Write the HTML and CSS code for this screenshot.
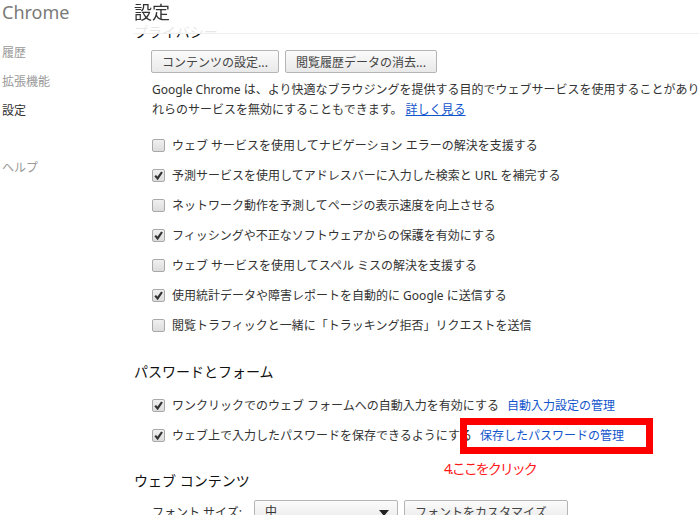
FILE: index.html
```html
<!DOCTYPE html>
<html lang="ja">
<head>
  <meta charset="UTF-8">
  <title>設定</title>
  <link rel="stylesheet" href="styles.css">
</head>
<body>

  <!-- left navigation -->
  <div class="nav">
    <div class="nav-title">Chrome</div>
    <ul class="nav-list">
      <li>履歴</li>
      <li>拡張機能</li>
      <li class="selected">設定</li>
      <li class="help">ヘルプ</li>
    </ul>
  </div>

  <div class="main">
    <div class="page-header">
      <h1>設定</h1>
      <input class="search" type="text" value="設定を検索">
    </div>

    <div class="section">
      <h3>プライバシー</h3>
      <div class="section-body">
        <div class="button-row">
          <button class="btn">コンテンツの設定...</button>
          <button class="btn">閲覧履歴データの消去...</button>
        </div>
        <p class="desc">Google Chrome は、より快適なブラウジングを提供する目的でウェブサービスを使用することがあります。必要に応じて、こ<br>れらのサービスを無効にすることもできます。 <a href="#">詳しく見る</a></p>

        <div class="check-row"><span class="cb"></span>ウェブ サービスを使用してナビゲーション エラーの解決を支援する</div>
        <div class="check-row"><span class="cb checked"></span>予測サービスを使用してアドレスバーに入力した検索と URL を補完する</div>
        <div class="check-row"><span class="cb"></span>ネットワーク動作を予測してページの表示速度を向上させる</div>
        <div class="check-row"><span class="cb checked"></span>フィッシングや不正なソフトウェアからの保護を有効にする</div>
        <div class="check-row"><span class="cb"></span>ウェブ サービスを使用してスペル ミスの解決を支援する</div>
        <div class="check-row"><span class="cb checked"></span>使用統計データや障害レポートを自動的に Google に送信する</div>
        <div class="check-row"><span class="cb"></span>閲覧トラフィックと一緒に「トラッキング拒否」リクエストを送信</div>
      </div>
    </div>

    <div class="section">
      <h3>パスワードとフォーム</h3>
      <div class="section-body">
        <div class="check-row"><span class="cb checked"></span>ワンクリックでのウェブ フォームへの自動入力を有効にする<a class="manage" href="#">自動入力設定の管理</a></div>
        <div class="check-row"><span class="cb checked"></span>ウェブ上で入力したパスワードを保存できるようにする<a class="manage marked" href="#">保存したパスワードの管理<span class="red-box"></span><span class="note">4.ここをクリック</span></a></div>
      </div>
    </div>

    <div class="section">
      <h3>ウェブ コンテンツ</h3>
      <div class="section-body">
        <div class="font-row">
          <span class="font-label">フォント サイズ:</span>
          <div class="select">中<span class="arrow"></span></div>
          <button class="btn">フォントをカスタマイズ...</button>
        </div>
      </div>
    </div>
  </div>

</body>
</html>
```

FILE: styles.css
```css
body {
  margin: 0;
  display: flex;
  font-family: "Noto Sans", "Noto Sans CJK JP", sans-serif;
  font-size: 12px;
  color: #303030;
  overflow: hidden;
  height: 515px;
}

.nav {
  width: 134px;
  flex-shrink: 0;
  padding-left: 2px;
  box-sizing: border-box;
}

.nav-title {
  font-size: 18px;
  line-height: 24px;
  color: #7a7a7a;
}

.nav-list {
  list-style: none;
  margin: 14px 0 0;
  padding: 0;
}

.nav-list li {
  line-height: 29px;
  color: #999;
}

.nav-list li.selected {
  color: #333;
}

.nav-list li.help {
  margin-top: 28px;
}

.main {
  flex: 1;
  padding-top: 22px;
}

/* header over the scrolled content */
.page-header {
  position: fixed;
  top: 0;
  left: 134px;
  right: 0;
  height: 33px;
  display: flex;
  align-items: flex-start;
  background: rgba(255, 255, 255, 0.9);
  border-bottom: 1px solid #eee;
  overflow: hidden;
  z-index: 2;
}

.page-header h1 {
  margin: 0;
  font-size: 18px;
  font-weight: normal;
  line-height: 24px;
  color: #333;
}

.search {
  margin-left: auto;
  margin-right: -150px;
  margin-top: 2px;
  width: 150px;
  height: 23px;
  box-sizing: border-box;
  border: 1px solid #bbb;
  border-radius: 2px;
  padding: 0 4px;
  font: 12px "Noto Sans CJK JP", sans-serif;
  color: #999;
}

.section h3 {
  margin: 0;
  font-size: 14px;
  font-weight: normal;
  line-height: 20px;
  color: #111;
}

.section + .section {
  margin-top: 22px;
}

.section:last-child {
  margin-top: 21px;
}

.section-body {
  padding-left: 18px;
  margin-top: 8px;
}

.button-row {
  display: flex;
  gap: 6px;
  margin-left: -1px;
}

.btn {
  height: 23px;
  padding: 0 10px;
  border: 1px solid #b5b5b5;
  border-radius: 2px;
  background: linear-gradient(#fbfbfb, #e9e9e9);
  font: 12px "Noto Sans CJK JP", sans-serif;
  color: #444;
  white-space: nowrap;
}

.desc {
  margin: 7px 0 10px;
  line-height: 20px;
  white-space: nowrap;
  color: #333;
}

a {
  color: #15c;
}

.desc a {
  text-decoration: underline;
}

.check-row {
  display: flex;
  align-items: center;
  height: 30px;
  white-space: nowrap;
  color: #333;
}

.cb {
  width: 13px;
  height: 13px;
  box-sizing: border-box;
  border: 1px solid #a9a9a9;
  border-radius: 2px;
  background: linear-gradient(#f0f0f0, #dcdcdc);
  margin-right: 7px;
  flex-shrink: 0;
}

.cb.checked {
  background: url("data:image/svg+xml,%3Csvg xmlns='http://www.w3.org/2000/svg' width='11' height='11'%3E%3Cpath d='M2.2 5.6 L4.6 8.4 L9 2' fill='none' stroke='%23333' stroke-width='2.2'/%3E%3C/svg%3E") center / 11px 11px no-repeat, linear-gradient(#f0f0f0, #dcdcdc);
}

.manage {
  margin-left: 8px;
  text-decoration: none;
}

.manage.marked {
  position: relative;
}

/* annotation painted on the screenshot */
.red-box {
  position: absolute;
  left: -20px;
  top: -8px;
  width: 193px;
  height: 36px;
  box-sizing: border-box;
  border: 7px solid #ff0000;
}

.note {
  position: absolute;
  left: -36px;
  top: 32px;
  font-size: 14px;
  letter-spacing: -2px;
  color: #ff1a1a;
  white-space: nowrap;
}

.font-row {
  display: flex;
  align-items: center;
  gap: 6px;
  margin-top: 9px;
}

.font-label {
  width: 96px;
  color: #333;
}

.select {
  position: relative;
  width: 144px;
  height: 23px;
  box-sizing: border-box;
  border: 1px solid #b5b5b5;
  border-radius: 2px;
  background: linear-gradient(#fbfbfb, #e9e9e9);
  padding-left: 10px;
  line-height: 21px;
  color: #333;
}

.arrow {
  position: absolute;
  right: 8px;
  top: 9px;
  border-left: 5px solid transparent;
  border-right: 5px solid transparent;
  border-top: 6px solid #222;
}
```
